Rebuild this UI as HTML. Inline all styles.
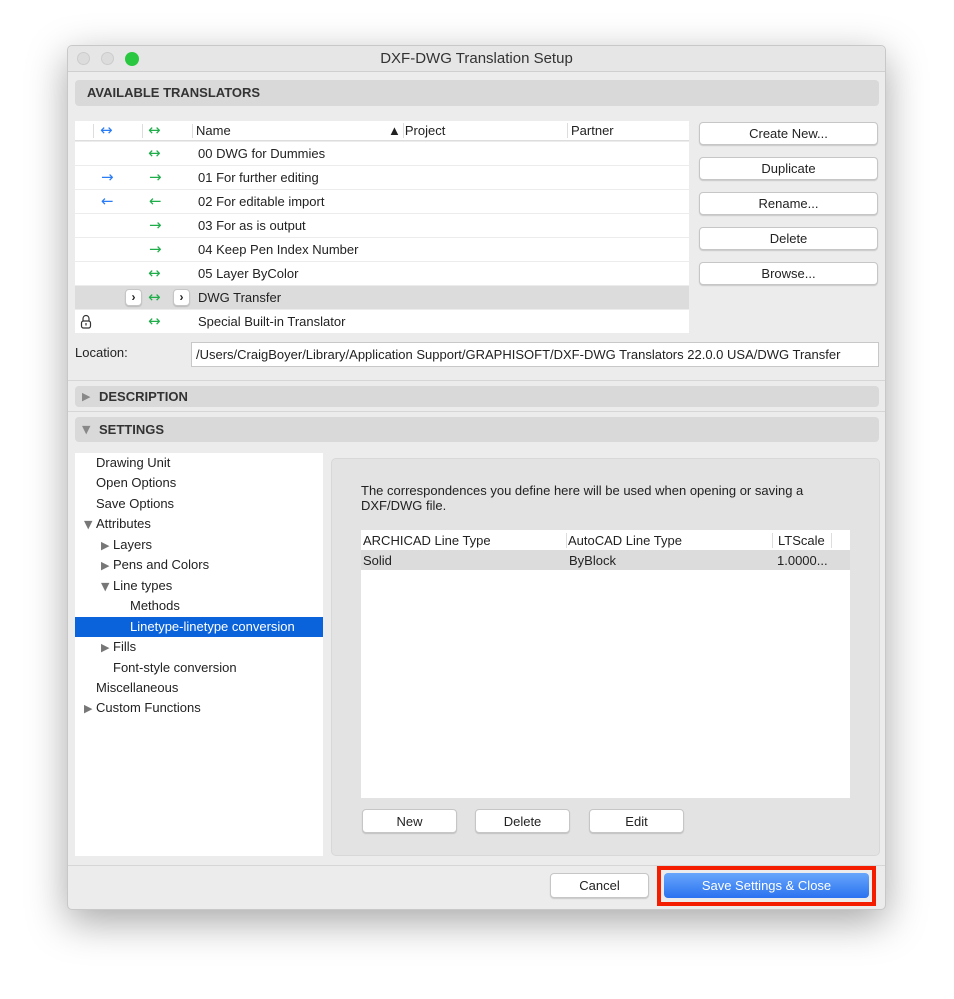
<!DOCTYPE html><html><head><style>
*{box-sizing:border-box;margin:0;padding:0}
body{width:954px;height:999px;background:#fff;font-family:"Liberation Sans",sans-serif;font-size:13px;color:#222;position:relative;overflow:hidden}
.a{position:absolute}
.win{left:67px;top:45px;width:819px;height:865px;background:#ececec;border:1px solid #c8c8c8;border-radius:5px;box-shadow:0 12px 40px rgba(0,0,0,.35)}
.bar{background:#d9d9d9;border-radius:4px;font-weight:bold;font-size:13px;color:#333}
.btn{background:#fff;border:1px solid #c6c6c6;border-radius:4px;text-align:center;font-size:13px;box-shadow:0 1px 1px rgba(0,0,0,.15)}
.row{left:75px;width:614px;height:23px;background:#fff;line-height:23px}
.t{font-size:13px}
.g,.b{font-family:"DejaVu Sans",sans-serif;font-size:15px;line-height:23px}
.g{color:#1fad4a}.b{color:#2a7cf5}
.tr{position:absolute;font-size:13px;line-height:16px}
.k{color:#777;font-size:11px;display:inline-block;width:12px;font-family:"DejaVu Sans",sans-serif}
</style></head><body>
<div class="a win"></div>
<div class="a" style="left:68px;top:46px;width:817px;height:26px;background:#e6e6e6;border-bottom:1px solid #cfcfcf;border-radius:5px 5px 0 0"></div>
<div class="a" style="left:77px;top:52px;width:13px;height:13px;border-radius:50%;background:#dcdcdc;border:1px solid #ccc"></div>
<div class="a" style="left:101px;top:52px;width:13px;height:13px;border-radius:50%;background:#dcdcdc;border:1px solid #ccc"></div>
<div class="a" style="left:125px;top:52px;width:14px;height:14px;border-radius:50%;background:#2ac840"></div>
<div class="a" style="left:68px;top:50px;width:817px;text-align:center;font-size:15px;color:#333">DXF-DWG Translation Setup</div>
<div class="a bar" style="left:75px;top:80px;width:804px;height:26px;line-height:26px;padding-left:12px">AVAILABLE TRANSLATORS</div>
<div class="a" style="left:75px;top:121px;width:614px;height:20px;background:#fff;border-bottom:1px solid #ddd"></div>
<div class="a b" style="left:100px;top:119px">↔</div><div class="a g" style="left:148px;top:119px">↔</div>
<div class="a" style="left:93px;top:124px;height:14px;border-left:1px solid #ddd"></div>
<div class="a" style="left:142px;top:124px;height:14px;border-left:1px solid #ddd"></div>
<div class="a" style="left:192px;top:124px;height:14px;border-left:1px solid #ddd"></div>
<div class="a t" style="left:196px;top:123px">Name</div><div class="a t" style="left:388px;top:123px">▲<span style="border-left:1px solid #ddd;margin-left:2px;padding-left:1px">Project</span></div><div class="a t" style="left:567px;top:123px;border-left:1px solid #ddd;padding-left:3px">Partner</div>
<div class="a row" style="top:142px"><span class="a g" style="left:73px">↔</span><span class="a" style="left:123px">00 DWG for Dummies</span></div>
<div class="a row" style="top:166px"><span class="a b" style="left:26px">→</span><span class="a g" style="left:74px">→</span><span class="a" style="left:123px">01 For further editing</span></div>
<div class="a row" style="top:190px"><span class="a b" style="left:26px">←</span><span class="a g" style="left:74px">←</span><span class="a" style="left:123px">02 For editable import</span></div>
<div class="a row" style="top:214px"><span class="a g" style="left:74px">→</span><span class="a" style="left:123px">03 For as is output</span></div>
<div class="a row" style="top:238px"><span class="a g" style="left:74px">→</span><span class="a" style="left:123px">04 Keep Pen Index Number</span></div>
<div class="a row" style="top:262px"><span class="a g" style="left:73px">↔</span><span class="a" style="left:123px">05 Layer ByColor</span></div>
<div class="a row" style="top:286px;background:#dcdcdc"><span class="a btn" style="left:50px;top:3px;width:17px;height:17px;line-height:15px;font-weight:bold;font-size:12px">›</span><span class="a g" style="left:73px">↔</span><span class="a btn" style="left:98px;top:3px;width:17px;height:17px;line-height:15px;font-weight:bold;font-size:12px">›</span><span class="a" style="left:123px">DWG Transfer</span></div>
<div class="a row" style="top:310px"><svg class="a" style="left:5px;top:4px" width="12" height="15" viewBox="0 0 12 15"><path d="M3 7V4.5a3 3 0 0 1 6 0V7" fill="none" stroke="#333" stroke-width="1.2"/><rect x="1.5" y="7" width="9" height="7" rx="2" fill="none" stroke="#333" stroke-width="1.2"/><path d="M6 9v2.5" stroke="#333" stroke-width="1.2"/></svg><span class="a g" style="left:73px">↔</span><span class="a" style="left:123px">Special Built-in Translator</span></div>
<div class="a btn" style="left:699px;top:122px;width:179px;height:23px;line-height:22px">Create New...</div>
<div class="a btn" style="left:699px;top:157px;width:179px;height:23px;line-height:22px">Duplicate</div>
<div class="a btn" style="left:699px;top:192px;width:179px;height:23px;line-height:22px">Rename...</div>
<div class="a btn" style="left:699px;top:227px;width:179px;height:23px;line-height:22px">Delete</div>
<div class="a btn" style="left:699px;top:262px;width:179px;height:23px;line-height:22px">Browse...</div>
<div class="a t" style="left:75px;top:345px">Location:</div>
<div class="a" style="left:191px;top:342px;width:688px;height:25px;background:#fff;border:1px solid #c8c8c8;line-height:23px;padding-left:4px;overflow:hidden;white-space:nowrap">/Users/CraigBoyer/Library/Application Support/GRAPHISOFT/DXF-DWG Translators 22.0.0 USA/DWG Transfer</div>
<div class="a" style="left:68px;top:380px;width:817px;border-top:1px solid #d6d6d6"></div>
<div class="a bar" style="left:75px;top:386px;width:804px;height:21px;line-height:21px;padding-left:24px">DESCRIPTION</div>
<div class="a" style="left:82px;top:387px;color:#888;font-size:11px;line-height:19px;font-family:'DejaVu Sans'">▶</div>
<div class="a" style="left:68px;top:411px;width:817px;border-top:1px solid #d6d6d6"></div>
<div class="a bar" style="left:75px;top:417px;width:804px;height:25px;line-height:25px;padding-left:24px">SETTINGS</div>
<div class="a" style="left:82px;top:418px;color:#888;font-size:11px;line-height:23px;font-family:'DejaVu Sans'">▼</div>
<div class="a" style="left:75px;top:453px;width:248px;height:403px;background:#fff"></div>
<div class="a" style="left:75px;top:617px;width:248px;height:20px;background:#0a63db"></div>
<div class="tr" style="left:96px;top:455px">Drawing Unit</div>
<div class="tr" style="left:96px;top:475px">Open Options</div>
<div class="tr" style="left:96px;top:496px">Save Options</div>
<div class="tr" style="left:84px;top:516px"><span class="k">▼</span>Attributes</div>
<div class="tr" style="left:101px;top:537px"><span class="k">▶</span>Layers</div>
<div class="tr" style="left:101px;top:557px"><span class="k">▶</span>Pens and Colors</div>
<div class="tr" style="left:101px;top:578px"><span class="k">▼</span>Line types</div>
<div class="tr" style="left:130px;top:598px">Methods</div>
<div class="tr" style="left:130px;top:619px;color:#fff">Linetype-linetype conversion</div>
<div class="tr" style="left:101px;top:639px"><span class="k">▶</span>Fills</div>
<div class="tr" style="left:113px;top:660px">Font-style conversion</div>
<div class="tr" style="left:96px;top:680px">Miscellaneous</div>
<div class="tr" style="left:84px;top:700px"><span class="k">▶</span>Custom Functions</div>
<div class="a" style="left:331px;top:458px;width:549px;height:398px;background:#e3e3e3;border:1px solid #d8d8d8;border-radius:5px"></div>
<div class="a t" style="left:361px;top:483px;line-height:15px;width:490px">The correspondences you define here will be used when opening or saving a DXF/DWG file.</div>
<div class="a" style="left:361px;top:530px;width:489px;height:268px;background:#fff"></div>
<div class="a t" style="left:363px;top:533px">ARCHICAD Line Type</div>
<div class="a t" style="left:566px;top:533px;border-left:1px solid #ddd;padding-left:1px">AutoCAD Line Type</div>
<div class="a t" style="left:772px;top:533px;border-left:1px solid #ddd;padding-left:5px;width:60px;border-right:1px solid #ddd">LTScale</div>
<div class="a" style="left:361px;top:550px;width:489px;height:20px;background:#dcdcdc"></div>
<div class="a t" style="left:363px;top:553px">Solid</div><div class="a t" style="left:569px;top:553px">ByBlock</div><div class="a t" style="left:777px;top:553px">1.0000...</div>
<div class="a btn" style="left:362px;top:809px;width:95px;height:24px;line-height:23px">New</div>
<div class="a btn" style="left:475px;top:809px;width:95px;height:24px;line-height:23px">Delete</div>
<div class="a btn" style="left:589px;top:809px;width:95px;height:24px;line-height:23px">Edit</div>
<div class="a" style="left:68px;top:865px;width:817px;border-top:1px solid #d6d6d6"></div>
<div class="a btn" style="left:550px;top:873px;width:99px;height:25px;line-height:24px">Cancel</div>
<div class="a" style="left:657px;top:866px;width:219px;height:40px;border:4px solid #f51d00"></div>
<div class="a" style="left:664px;top:873px;width:205px;height:25px;line-height:25px;border-radius:4px;background:linear-gradient(#67a6fb,#2a72f0);color:#fff;text-align:center">Save Settings &amp; Close</div>
</body></html>
